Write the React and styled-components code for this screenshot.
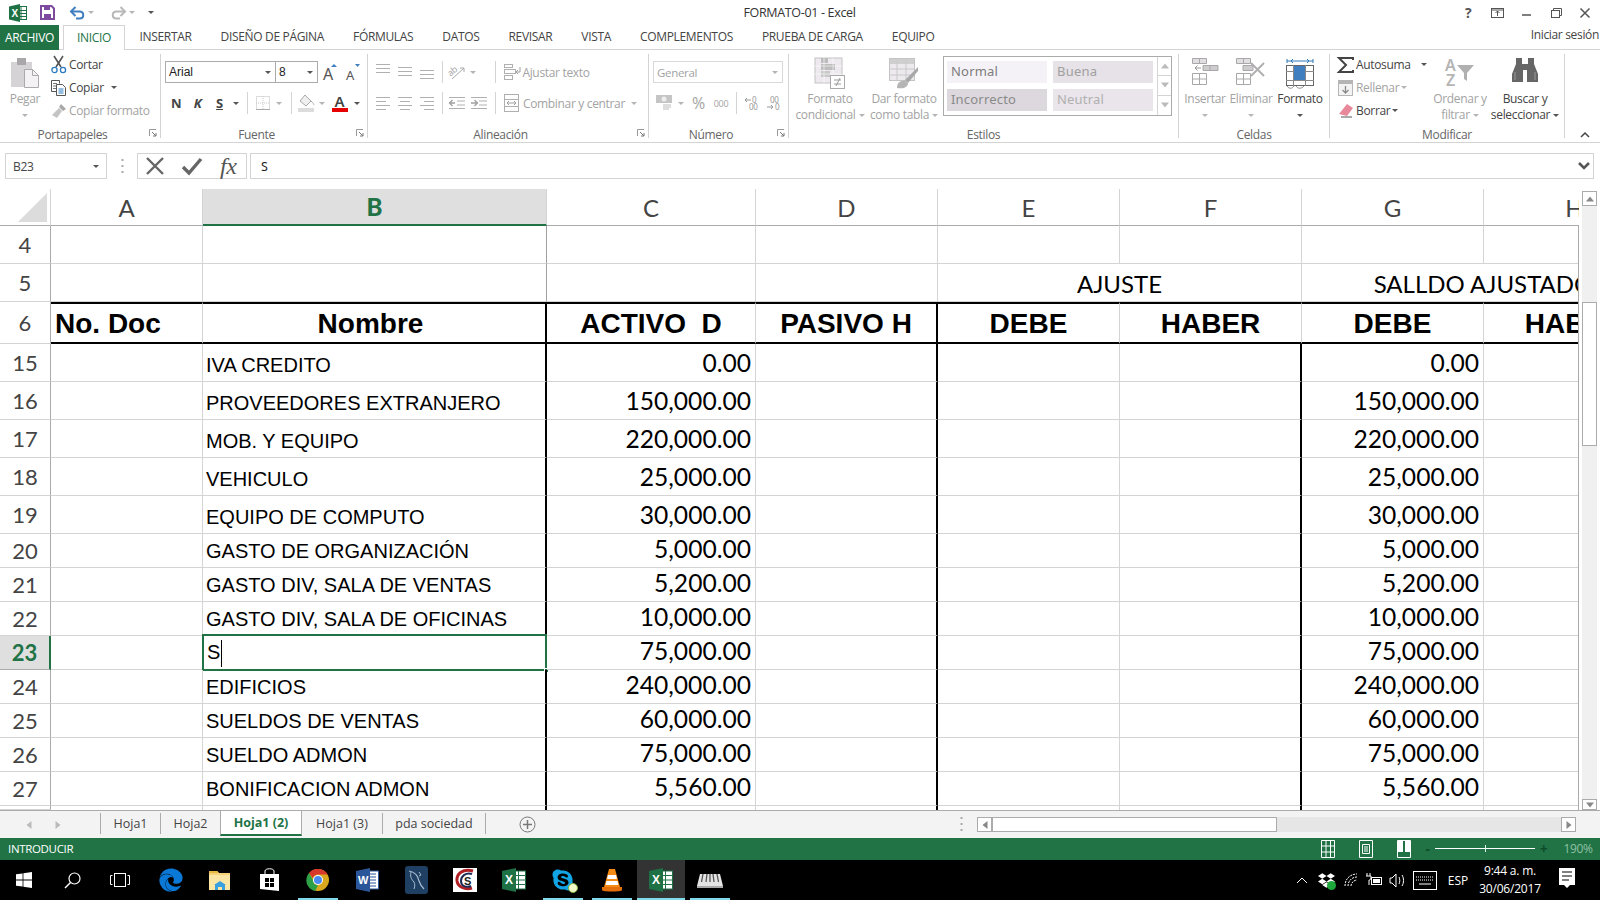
import React from "react";
import styled, { createGlobalStyle } from "styled-components";
import { FaEdge, FaSkype, FaDropbox } from "react-icons/fa";

const UI = '"Open Sans", "Noto Sans", sans-serif';
const CALIBRI = 'Lato, "Noto Sans", sans-serif';
const ARIAL = '"Liberation Sans", Arial, sans-serif';
const GREEN = "#217346";
const GRID = "#d4d4d4";
const EDGE = "#ababab";
const DIM = "#a3a3a3";
const COLS = "51px 152px 344px 209px 182px 182px 182px 182px 182px";

const GlobalStyle = createGlobalStyle`
  html, body { margin: 0; padding: 0; background: #fff; overflow: hidden; }
  * { box-sizing: border-box; }
  svg { overflow: visible; }
`;

const Window = styled.div`
  width: 1600px;
  height: 900px;
  display: flex;
  flex-direction: column;
  font-family: ${UI};
  font-size: 12px;
  letter-spacing: -0.33px;
  color: #444;
  overflow: hidden;
`;

/* title bar */
const TitleBar = styled.div`
  height: 25px;
  display: flex;
  align-items: center;
  padding-left: 9px;
  flex-shrink: 0;
`;
const Qat = styled.div`
  width: 502px;
  display: flex;
  align-items: center;
`;
const QatSlot = styled.div`
  width: ${(p) => p.$w}px;
  display: flex;
  align-items: center;
  gap: 3px;
`;
const WindowTitle = styled.div`
  width: 574px;
  text-align: center;
  font-size: 12.5px;
  color: #333;
  padding-left: 3px;
`;
const WinButtons = styled.div`
  margin-left: auto;
  padding-right: 0;
  display: flex;
`;
const WinButton = styled.div`
  width: 29.3px;
  height: 22px;
  display: flex;
  align-items: center;
  justify-content: center;
  font-weight: 700;
  font-size: 14px;
  color: #555;
`;

/* tabs */
const TabBar = styled.div`
  height: 25px;
  display: flex;
  border-bottom: 1px solid ${GRID};
  flex-shrink: 0;
`;
const FileTab = styled.div`
  width: 59px;
  height: 25px;
  background: ${GREEN};
  color: #fff;
  display: flex;
  align-items: center;
  justify-content: center;
  padding-bottom: 1px;
`;
const RibbonTab = styled.div`
  height: 25px;
  padding: 0 14.5px 2px;
  display: flex;
  align-items: center;
  white-space: nowrap;
  ${(p) =>
    p.$active
      ? `color: ${GREEN}; background:#fff; border: 1px solid ${GRID}; border-bottom: 0; margin-left: 4px; padding: 0 13px 2px;`
      : ""}
`;
const SignIn = styled.div`
  margin-left: auto;
  padding: 1px 1px 0 0;
  color: #444;
  white-space: nowrap;
`;

/* ribbon */
const Ribbon = styled.div`
  height: 93px;
  display: flex;
  padding-top: 4px;
  border-bottom: 1px solid ${GRID};
  flex-shrink: 0;
`;
const Group = styled.div`
  width: ${(p) => p.$w}px;
  height: 84px;
  border-right: 1px solid ${GRID};
  display: flex;
  flex-direction: column;
  flex-shrink: 0;
`;
const GroupBody = styled.div`
  height: 71px;
  display: flex;
  flex-shrink: 0;
  padding-left: ${(p) => p.$pl || 0}px;
`;
const GroupLabel = styled.div`
  height: 19px;
  flex-shrink: 0;
  position: relative;
  text-align: center;
  line-height: 19px;
  color: #666;
  padding-right: ${(p) => (p.$launcher ? 15 : 0)}px;
`;
const Launcher = styled.svg`
  position: absolute;
  right: 3px;
  top: 4px;
`;
const Collapse = styled.div`
  flex: 1;
  display: flex;
  align-items: flex-end;
  justify-content: flex-end;
  padding: 0 10px 0 0;
  height: 84px;
`;
const BigButton = styled.div`
  width: ${(p) => p.$w}px;
  display: flex;
  flex-direction: column;
  align-items: center;
  padding-top: 4px;
  flex-shrink: 0;
  color: ${(p) => (p.$dim ? DIM : "#444")};
`;
const BigIcon = styled.div`
  height: 33px;
  display: flex;
  align-items: flex-start;
  justify-content: center;
`;
const BigText = styled.div`
  height: 16px;
  line-height: 16px;
  white-space: nowrap;
  display: flex;
  align-items: center;
  gap: 3px;
`;
const CaretLine = styled.div`
  height: 16px;
  display: flex;
  align-items: center;
  justify-content: center;
`;
const Caret = styled.span`
  display: inline-block;
  width: 0;
  height: 0;
  border-left: 3px solid transparent;
  border-right: 3px solid transparent;
  border-top: 3px solid ${(p) => (p.$dim ? "#b5b5b5" : "#555")};
`;
const SmallColumn = styled.div`
  width: ${(p) => p.$w}px;
  display: flex;
  flex-direction: column;
  flex-shrink: 0;
  margin-top: -1px;
`;
const SmallRow = styled.div`
  height: 23px;
  display: flex;
  align-items: center;
  gap: 2px;
  white-space: nowrap;
  color: ${(p) => (p.$dim ? DIM : "#444")};
`;
const SmallIcon = styled.div`
  width: 17px;
  height: 18px;
  display: flex;
  align-items: center;
  justify-content: center;
  flex-shrink: 0;
`;
const ToolColumn = styled.div`
  display: flex;
  flex-direction: column;
  gap: 9px;
  padding-top: 7px;
`;
const ToolRow = styled.div`
  height: 22px;
  display: flex;
  align-items: center;
  white-space: nowrap;
  color: ${(p) => (p.$dim ? DIM : "#444")};
`;
const Slot = styled.div`
  width: ${(p) => p.$w}px;
  height: 22px;
  display: flex;
  align-items: center;
  justify-content: center;
  flex-shrink: 0;
  white-space: nowrap;
  font-weight: ${(p) => (p.$bold ? 700 : 400)};
  font-size: ${(p) => p.$size || 12}px;
  text-decoration: ${(p) => (p.$under ? "underline" : "none")};
  font-style: ${(p) => (p.$italic ? "italic" : "normal")};
  color: ${(p) => p.$color || "inherit"};
`;
const Divider = styled.div`
  width: 1px;
  height: 22px;
  background: ${GRID};
  flex-shrink: 0;
  margin-left: ${(p) => p.$l || 0}px;
  margin-right: ${(p) => p.$r || 0}px;
`;
const ComboBox = styled.div`
  width: ${(p) => p.$w}px;
  height: 22px;
  border: 1px solid ${(p) => (p.$dim ? "#d9d9d9" : EDGE)};
  background: #fff;
  display: flex;
  align-items: center;
  justify-content: space-between;
  padding: 0 4px 0 3px;
  margin-left: ${(p) => p.$ml || 0}px;
  flex-shrink: 0;
  color: ${(p) => (p.$dim ? DIM : "#222")};
  font-size: ${(p) => (p.$dim ? 11.5 : 12)}px;
`;
const ComboArial = styled.span`
  font-family: ${ARIAL};
  font-size: 12px;
  letter-spacing: 0;
`;
const Gallery = styled.div`
  width: 229px;
  height: 60px;
  margin: 2px 0 0 2px;
  border: 1px solid ${EDGE};
  display: flex;
  flex-shrink: 0;
`;
const StyleGrid = styled.div`
  display: grid;
  grid-template-columns: 100px 100px;
  grid-auto-rows: 22px;
  gap: 6px;
  padding: 4px 0 0 3px;
  width: 213px;
`;
const StyleCell = styled.div`
  background: ${(p) => p.$bg};
  color: ${(p) => p.$color};
  font-family: "Noto Sans", sans-serif;
  font-size: 13px;
  letter-spacing: 0.2px;
  line-height: 21px;
  padding-left: 4px;
`;
const GalleryScroll = styled.div`
  flex: 1;
  border-left: 1px solid ${GRID};
  display: grid;
  grid-template-rows: 1fr 1fr 1fr;
`;
const GalleryArrow = styled.div`
  display: flex;
  align-items: center;
  justify-content: center;
  border-bottom: ${(p) => (p.$last ? 0 : `1px solid ${GRID}`)};
`;

/* formula bar */
const FormulaBar = styled.div`
  height: 26px;
  margin: 10px 0;
  padding: 0 6px 0 5px;
  display: flex;
  flex-shrink: 0;
`;
const NameBox = styled.div`
  width: 102px;
  border: 1px solid ${GRID};
  display: flex;
  align-items: center;
  justify-content: space-between;
  padding: 0 7px;
  color: #444;
`;
const FormulaDots = styled.div`
  width: 30px;
  display: flex;
  align-items: center;
  justify-content: center;
`;
const FxBox = styled.div`
  width: 110px;
  border: 1px solid ${GRID};
  display: flex;
  align-items: center;
  gap: 18px;
  padding: 0 0 0 8px;
`;
const FxText = styled.span`
  font-family: "Liberation Serif", serif;
  font-style: italic;
  font-size: 24px;
  color: #555;
  line-height: 1;
`;
const FormulaInput = styled.div`
  flex: 1;
  margin-left: 3px;
  border: 1px solid ${GRID};
  display: flex;
  align-items: center;
  justify-content: space-between;
  padding: 0 3px 0 10px;
  font-family: "Noto Sans", sans-serif;
  font-size: 12.5px;
  color: #222;
`;

/* sheet */
const Sheet = styled.div`
  height: 621px;
  display: flex;
  flex-shrink: 0;
`;
const GridArea = styled.div`
  width: 1579px;
  overflow: hidden;
  display: flex;
  flex-direction: column;
  position: relative;
`;
const GridEdge = styled.div`
  position: absolute;
  right: 0;
  top: 36px;
  bottom: 0;
  width: 1px;
  background: ${EDGE};
`;
const Row = styled.div`
  display: grid;
  grid-template-columns: ${COLS};
  height: ${(p) => p.$h}px;
  flex-shrink: 0;
`;
const Corner = styled.div`
  border-right: 1px solid ${GRID};
  border-bottom: 1px solid ${EDGE};
  display: flex;
  padding: 4px 3px 3px 18px;
`;
const CornerMark = styled.div`
  width: 29px;
  height: 29px;
  background: #dcdcdc;
  clip-path: polygon(100% 0, 100% 100%, 0 100%);
`;
const ColHead = styled.div`
  border-right: 1px solid ${GRID};
  border-bottom: ${(p) => (p.$on ? `2px solid ${GREEN}` : `1px solid ${EDGE}`)};
  background: ${(p) => (p.$on ? "#dfdfdf" : "#fff")};
  color: ${(p) => (p.$on ? GREEN : "#444")};
  font-family: ${CALIBRI};
  font-weight: ${(p) => (p.$on ? 900 : 400)};
  font-size: 24px;
  letter-spacing: 0;
  display: flex;
  align-items: center;
  justify-content: center;
  overflow: hidden;
`;
const RowHead = styled.div`
  border-right: ${(p) => (p.$on ? `2px solid ${GREEN}` : `1px solid ${EDGE}`)};
  border-bottom: 1px solid ${(p) => (p.$on ? EDGE : GRID)};
  background: ${(p) => (p.$on ? "#dfdfdf" : "#fff")};
  color: ${(p) => (p.$on ? GREEN : "#444")};
  font-family: ${CALIBRI};
  font-weight: ${(p) => (p.$on ? 700 : 400)};
  font-size: 22px;
  letter-spacing: 0;
  display: flex;
  align-items: center;
  justify-content: center;
  padding-bottom: 1px;
  overflow: hidden;
`;
const Cell = styled.div`
  border-right: ${(p) => p.$right || `1px solid ${GRID}`};
  border-bottom: ${(p) => p.$bottom || `1px solid ${GRID}`};
  border-top: ${(p) => p.$top || "0"};
  ${(p) => (p.$span ? `grid-column: span ${p.$span};` : "")}
  display: flex;
  align-items: flex-end;
  justify-content: ${(p) => p.$justify || "flex-start"};
  white-space: pre;
  color: #000;
  position: relative;
  min-width: 0;
`;
const NameText = styled.span`
  font-family: ${ARIAL};
  font-size: 20px;
  letter-spacing: 0;
  line-height: 24px;
  padding: 0 0 4px 3px;
`;
const AmountText = styled.span`
  font-family: ${CALIBRI};
  font-size: 24.6px;
  letter-spacing: 0;
  line-height: 30px;
  padding: 0 4px 3px 0;
`;
const MergedText = styled.span`
  font-family: ${CALIBRI};
  font-size: 24px;
  letter-spacing: 0;
  line-height: 30px;
  padding-bottom: 2px;
`;
const TitleText = styled.span`
  font-family: ${ARIAL};
  font-weight: 700;
  font-size: 28px;
  letter-spacing: 0;
  line-height: 32px;
  padding: 0 ${(p) => p.$pr || 0}px 2px ${(p) => p.$pl || 0}px;
`;
const ActiveCell = styled.div`
  position: absolute;
  left: -1px;
  top: -2px;
  right: -2px;
  bottom: -2px;
  border: 2px solid ${GREEN};
  background: #fff;
  display: flex;
  align-items: flex-end;
  padding: 0 0 1px 0;
`;
const TextCaret = styled.span`
  width: 1px;
  height: 27px;
  background: #000;
  margin: 0 0 1px 1px;
`;
const FillHandle = styled.div`
  position: absolute;
  right: -4px;
  bottom: -4px;
  width: 5px;
  height: 5px;
  background: ${GREEN};
  border: 1px solid #fff;
`;

/* vertical scrollbar */
const VScroll = styled.div`
  width: 21px;
  padding: 2px 3px 0;
  display: flex;
  flex-direction: column;
`;
const ScrollButton = styled.div`
  width: ${(p) => p.$w || 15}px;
  height: ${(p) => p.$h || 15}px;
  background: #fff;
  border: 1px solid ${EDGE};
  display: flex;
  align-items: center;
  justify-content: center;
  flex-shrink: 0;
`;
const VTrack = styled.div`
  flex: 1;
  background: #f0f0f0;
  padding-top: 96px;
`;
const VThumb = styled.div`
  height: 144px;
  background: #fff;
  border: 1px solid ${EDGE};
`;

/* sheet tabs */
const SheetBar = styled.div`
  height: 28px;
  background: #f3f3f3;
  border-top: 1px solid ${EDGE};
  display: flex;
  flex-shrink: 0;
`;
const SheetNav = styled.div`
  width: 100px;
  display: flex;
  align-items: center;
  padding-left: 25px;
  gap: 21px;
`;
const SheetTab = styled.div`
  width: ${(p) => p.$w}px;
  height: 25px;
  display: flex;
  align-items: center;
  justify-content: center;
  font-size: 12.5px;
  white-space: nowrap;
  letter-spacing: 0;
  ${(p) =>
    p.$active
      ? `background:#fff; color:${GREEN}; font-weight:700; border-bottom:2px solid ${GREEN}; border-left:1px solid ${EDGE}; border-right:1px solid ${EDGE};`
      : `margin-top: 2px; height: 21px; border-right: ${
          p.$sep ? `1px solid ${EDGE}` : "0"
        }; border-left: ${p.$first ? `1px solid ${EDGE}` : "0"};`}
`;
const AddSheet = styled.div`
  margin-left: 33px;
  display: flex;
  align-items: center;
`;
const BarRight = styled.div`
  margin-left: auto;
  width: 647px;
  display: flex;
  align-items: center;
  padding-right: 24px;
`;
const SplitDots = styled.div`
  width: 16px;
  margin-right: 8px;
  display: flex;
  justify-content: center;
`;
const HScroll = styled.div`
  flex: 1;
  height: 15px;
  background: #e6e6e6;
  display: flex;
  justify-content: space-between;
`;
const HThumb = styled.div`
  width: 285px;
  height: 15px;
  background: #fff;
  border: 1px solid ${EDGE};
  margin-right: auto;
`;

/* status bar */
const StatusBar = styled.div`
  height: 22px;
  background: ${GREEN};
  color: #fff;
  display: flex;
  align-items: center;
  padding: 0 0 1px 8px;
  font-size: 11.5px;
  flex-shrink: 0;
`;
const StatusRight = styled.div`
  margin-left: auto;
  display: flex;
  align-items: center;
`;
const ViewSlot = styled.div`
  width: 38px;
  display: flex;
  justify-content: center;
`;
const ZoomSlider = styled.div`
  width: 100px;
  height: 1px;
  background: #fff;
  margin: 0 4px 0 3px;
  display: flex;
  justify-content: center;
  align-items: center;
`;
const ZoomTick = styled.div`
  width: 1px;
  height: 7px;
  background: #dfe;
  flex-shrink: 0;
`;
const ZoomSign = styled.span`
  color: #0e4d28;
  font-weight: 700;
  font-size: 14px;
  line-height: 1;
  width: 9px;
  text-align: center;
`;
const ZoomValue = styled.span`
  color: #8fc0a4;
  font-size: 12px;
  width: 52px;
  text-align: center;
  padding-left: 8px;
`;

/* taskbar */
const Taskbar = styled.div`
  height: 40px;
  background: #000;
  display: flex;
  flex-shrink: 0;
`;
const SysButton = styled.div`
  width: 48px;
  height: 40px;
  display: flex;
  align-items: center;
  justify-content: center;
`;
const TaskApps = styled.div`
  margin-left: 3px;
  display: flex;
  gap: 1px;
`;
const TaskApp = styled.div`
  width: 48px;
  height: 40px;
  display: flex;
  align-items: center;
  justify-content: center;
  position: relative;
  background: ${(p) => (p.$active ? "#333" : "transparent")};
  padding-bottom: 1px;
  &::after {
    content: "";
    position: absolute;
    left: ${(p) => (p.$active ? 0 : 4)}px;
    right: ${(p) => (p.$active ? 0 : 4)}px;
    bottom: 0;
    height: 2px;
    background: ${(p) => (p.$open ? "#7fdbe9" : "transparent")};
  }
`;
const AppBadge = styled.div`
  width: 23px;
  height: 28px;
  background: ${(p) => p.$bg};
  border-radius: ${(p) => p.$r || 0}px;
  display: flex;
  align-items: center;
  justify-content: center;
`;
const SkypeDot = styled.span`
  position: absolute;
  left: 29px;
  top: 23px;
  width: 10px;
  height: 10px;
  border-radius: 50%;
  background: #f4f7c8;
  border: 1px solid #7fb23a;
`;
const Tray = styled.div`
  margin-left: auto;
  display: flex;
  align-items: center;
  color: #fff;
`;
const TraySlot = styled.div`
  width: ${(p) => p.$w}px;
  display: flex;
  align-items: center;
  justify-content: center;
  font-size: 12px;
  letter-spacing: 0;
  position: relative;
`;
const TrayCheck = styled.span`
  position: absolute;
  left: 15px;
  top: 9px;
  width: 9px;
  height: 9px;
  border-radius: 50%;
  background: #1ea83c;
`;
const Clock = styled.div`
  width: 68px;
  text-align: center;
  font-size: 12px;
  line-height: 18px;
  letter-spacing: -0.2px;
  white-space: nowrap;
`;

/* drawings */
const Pegar = () => (
  <svg width="28" height="30" viewBox="0 0 28 30">
    <rect x="0" y="4" width="21" height="25" fill="#d6d3d7" />
    <rect x="6" y="0" width="9" height="7" fill="#aaa7ab" />
    <path d="M13.5 11.5h8l6 6v12h-14z" fill="#f4f2f5" stroke="#aaa" />
    <path d="M21.5 11.5v6h6" fill="none" stroke="#aaa" />
  </svg>
);
const Scissors = () => (
  <svg width="16" height="18" viewBox="0 0 16 18">
    <path d="M3 0l7 11M12 0L5 11" stroke="#555" strokeWidth="1.6" fill="none" />
    <circle cx="3.5" cy="14" r="2.6" fill="none" stroke="#2a7ac0" strokeWidth="1.3" />
    <circle cx="12" cy="14" r="2.6" fill="none" stroke="#2a7ac0" strokeWidth="1.3" />
  </svg>
);
const CopyIcon = () => (
  <svg width="16" height="16" viewBox="0 0 16 16">
    <path d="M.5.5h8v3M.5.5v11h5" fill="none" stroke="#555" />
    <path d="M2 3.5h4M2 6h3M2 8.500h3" stroke="#777" />
    <path d="M5.5 4.500h6l3 3v8h-9z" fill="#fff" stroke="#555" />
    <path d="M7.500 9h5M7.500 11h5M7.500 13h5" stroke="#2a7ac0" />
  </svg>
);
const BrushIcon = () => (
  <svg width="16" height="16" viewBox="0 0 16 16">
    <path d="M10 1l5 5-3 2-4-4z" fill="#a8a8a8" />
    <path d="M8 5l3 3-5 7-5-3z" fill="#c4c4c4" />
  </svg>
);
const FontGrow = ({ up }) => (
  <svg width="15" height="18" viewBox="0 0 15 18">
    <text x="0" y="17" fontFamily="Noto Sans, sans-serif" fontSize={up ? 16 : 13} fill="#555">
      A
    </text>
    <path d={up ? "M8 4l3-3 3 3z" : "M9 1h5l-2.500 3z"} fill="#3f7fbf" />
  </svg>
);
const BordersIcon = () => (
  <svg width="14" height="14" viewBox="0 0 14 14">
    <rect x=".5" y=".5" width="13" height="13" fill="none" stroke="#bbb" strokeDasharray="1 1" />
    <path d="M7 0v14M0 7h14" stroke="#c8c8c8" strokeDasharray="1 1" />
    <path d="M0 13.500h14" stroke="#aaa" />
  </svg>
);
const FillIcon = () => (
  <svg width="17" height="18" viewBox="0 0 17 18">
    <path d="M7 1l6 6-5 5-6-5z" fill="#efefef" stroke="#a8a8a8" />
    <path d="M13 7c2 2 3 3 3 4" stroke="#a8a8a8" fill="none" />
    <rect x="0" y="14" width="16" height="4" fill="#dcdcdc" />
  </svg>
);
const FontColorIcon = () => (
  <svg width="16" height="19" viewBox="0 0 16 19">
    <text x="2.500" y="13" fontFamily="Noto Sans, sans-serif" fontWeight="600" fontSize="15" fill="#444">
      A
    </text>
    <rect x="0" y="14" width="16" height="4" fill="#e60000" />
  </svg>
);
const AlignLines = ({ kind, top = 0 }) => {
  const spans = {
    left: [[0, 14], [0, 10], [0, 14], [0, 10]],
    center: [[0, 14], [2, 12], [0, 14], [2, 12]],
    right: [[0, 14], [4, 14], [0, 14], [4, 14]],
    flat: [[0, 14], [0, 14], [0, 14]],
  }[kind];
  return (
    <svg width="14" height="16" viewBox="0 0 14 16">
      {spans.map(([a, b], i) => (
        <path key={i} d={`M${a} ${top + i * 4 + 2.5}H${b}`} stroke="#b0b0b0" />
      ))}
    </svg>
  );
};
const OrientIcon = () => (
  <svg width="18" height="16" viewBox="0 0 18 16">
    <text x="0" y="10" fontSize="9" fontFamily="Noto Sans, sans-serif" fill="#aaa" transform="rotate(-40 5 8)">
      ab
    </text>
    <path d="M4 15L16 4M12 4h4v4" fill="none" stroke="#aaa" />
  </svg>
);
const IndentIcon = ({ flip }) => (
  <svg width="16" height="14" viewBox="0 0 16 14">
    <path d="M0 1.500h16M8 5h8M8 9h8M0 12.500h16" stroke="#b0b0b0" />
    <path d={flip ? "M0 7h6M3.500 4L6.500 7l-3 3" : "M6 7H.5M3.500 4L.5 7l3 3"} stroke="#a0a0a0" fill="none" strokeWidth="1.300" />
  </svg>
);
const WrapIcon = () => (
  <svg width="17" height="16" viewBox="0 0 17 16">
    <rect x=".5" y=".5" width="8" height="3" fill="none" stroke="#b0b0b0" />
    <rect x=".5" y="5.500" width="11" height="4" fill="none" stroke="#b0b0b0" />
    <rect x=".5" y="11.500" width="8" height="4" fill="none" stroke="#b0b0b0" />
    <path d="M16 3v5h-4M14 6l-2 2 2 2" fill="none" stroke="#a0a0a0" />
  </svg>
);
const MergeIcon = () => (
  <svg width="15" height="18" viewBox="0 0 15 18">
    <rect x=".5" y=".5" width="14" height="17" fill="none" stroke="#b0b0b0" />
    <path d="M0 5.500h15M0 12.500h15" stroke="#b0b0b0" />
    <path d="M3 9h9M3 9l2-2M3 9l2 2M12 9l-2-2M12 9l-2 2" fill="none" stroke="#a0a0a0" />
  </svg>
);
const CurrencyIcon = () => (
  <svg width="17" height="16" viewBox="0 0 17 16">
    <rect x="0" y="0" width="16" height="8" fill="#c5c5c5" />
    <circle cx="8" cy="4" r="2.500" fill="#eee" />
    <path d="M7 10h8M7 12h8M7 14h6" stroke="#bcbcbc" />
  </svg>
);
const DecIcon = ({ more }) => (
  <svg width="16" height="15" viewBox="0 0 16 15">
    <text x={more ? 4 : 8} y="7" fontSize="8" fontFamily="Noto Sans, sans-serif" fill="#999">
      {more ? "00" : "0"}
    </text>
    <text x={more ? 9 : 5} y="14" fontSize="8" fontFamily="Noto Sans, sans-serif" fill="#999">
      {more ? "0" : "00"}
    </text>
    <path d={more ? "M1 11h6M5 9l2 2-2 2" : "M7 4H1M3 2L1 4l2 2"} stroke="#999" fill="none" />
  </svg>
);
const CondIcon = () => (
  <svg width="30" height="31" viewBox="0 0 30 31">
    <rect x="0" y="0" width="27" height="25" fill="#eee9ef" stroke="#c4c4c4" />
    <rect x="6" y="0" width="7" height="5" fill="#bdbdbd" />
    <rect x="6" y="6" width="14" height="6" fill="#bdbdbd" />
    <rect x="6" y="13" width="9" height="6" fill="#c8c8c8" />
    <path d="M9 0v25M18 0v25M0 8h27M0 16h27" stroke="#fff" opacity=".6" />
    <rect x="15.500" y="17.500" width="14" height="13" fill="#fff" stroke="#aaa" />
    <path d="M19 22h7M19 26h7M25 20l-4 8" stroke="#999" fill="none" />
  </svg>
);
const TableIcon = () => (
  <svg width="30" height="31" viewBox="0 0 30 31">
    <rect x=".5" y=".5" width="25" height="22" fill="#eee9ef" stroke="#c4c4c4" />
    <rect x="1" y="1" width="24" height="5" fill="#cfcfcf" />
    <path d="M8 0v22M17 0v22M0 11h25M0 17h25" stroke="#c9c9c9" />
    <path d="M29 9L16 22l3 3L29 13z" fill="#a8a8a8" />
    <path d="M8 30c0-6 4-8 9-7l2 2c0 4-4 6-11 5z" fill="#b5b5b5" />
  </svg>
);
const InsertCells = () => (
  <svg width="27" height="28" viewBox="0 0 27 28">
    <path d="M.5.500h14v5H.500zM7.500.500v5" fill="#e2dfe3" stroke="#a8a8a8" />
    <path d="M11 7.500h15v5H11zM18 7.500v5" fill="#cfcccf" stroke="#a8a8a8" />
    <path d="M3 10h6M3 10l2.500-2.500M3 10l2.500 2.500" stroke="#999" fill="none" />
    <path d="M.5 15.500h14v11H.500zM7.500 15.500v11M.5 21h14" fill="#fff" stroke="#a8a8a8" />
  </svg>
);
const DeleteCells = () => (
  <svg width="30" height="28" viewBox="0 0 30 28">
    <path d="M.5.500h14v5H.500zM7.500.500v5" fill="#e2dfe3" stroke="#a8a8a8" />
    <path d="M7 7.500h10v5H7z" fill="#cfcccf" stroke="#a8a8a8" />
    <path d="M.5 15.500h14v11H.500zM7.500 15.500v11M.5 21h14" fill="#fff" stroke="#a8a8a8" />
    <path d="M15 5l13 13M28 5L15 18" stroke="#b0b0b0" strokeWidth="2" />
  </svg>
);
const FormatCells = () => (
  <svg width="28" height="31" viewBox="0 0 28 31">
    <path d="M1 3h26M1 1v4M27 1v4M5 3l2-2M5 3l2 2M23 3l-2-2M23 3l-2 2" stroke="#2f78b8" fill="none" />
    <rect x=".5" y="7.500" width="27" height="20" fill="#fff" stroke="#666" />
    <path d="M7.500 7v21M19.500 7v21M0 13.500h28M0 22.500h28" stroke="#888" />
    <rect x="8" y="8" width="11" height="14" fill="#3f7fbf" />
    <path d="M1 28c2 3 5 3 7 0M10 28c2 3 5 3 8 0" stroke="#888" fill="none" />
  </svg>
);
const Sigma = () => (
  <svg width="16" height="16" viewBox="0 0 16 16">
    <path d="M15 3V1H1l7 7-7 7h14v-2" fill="none" stroke="#444" strokeWidth="2" />
  </svg>
);
const FillDown = () => (
  <svg width="15" height="16" viewBox="0 0 15 16">
    <rect x=".5" y=".5" width="14" height="15" fill="#f3f3f3" stroke="#b5b5b5" />
    <rect x="1" y="1" width="13" height="3" fill="#b5b5b5" />
    <path d="M7.500 6v7M4.500 10l3 3 3-3" stroke="#8a8a8a" fill="none" strokeWidth="1.300" />
  </svg>
);
const Eraser = () => (
  <svg width="16" height="14" viewBox="0 0 16 14">
    <path d="M9 0l6 4-6 8-8-2z" fill="#e8899b" />
    <path d="M3 13h11" stroke="#555" />
  </svg>
);
const SortIcon = () => (
  <svg width="30" height="28" viewBox="0 0 30 28">
    <text x="0" y="13" fontFamily="Noto Sans, sans-serif" fontWeight="600" fontSize="16" fill="#b5b5b5">
      A
    </text>
    <text x="1" y="28" fontFamily="Noto Sans, sans-serif" fontWeight="600" fontSize="16" fill="#b5b5b5">
      Z
    </text>
    <path d="M12 7h17l-7 8v8l-3-2v-6z" fill="#b0b0b0" />
  </svg>
);
const Binoculars = () => (
  <svg width="26" height="24" viewBox="0 0 26 24">
    <path d="M4 0h6v6h6V0h6v6l4 10v8H15V12h-4v12H0v-8L4 6z" fill="#666" />
    <path d="M3 22V14M23 22V14" stroke="#999" />
  </svg>
);
const ChevronUp = () => (
  <svg width="10" height="6" viewBox="0 0 10 6">
    <path d="M1 5l4-4 4 4" fill="none" stroke="#444" strokeWidth="1.500" />
  </svg>
);
const LauncherMark = () => (
  <Launcher width="8" height="8" viewBox="0 0 8 8">
    <path d="M.5 7V.500H7" fill="none" stroke="#999" />
    <path d="M3 3l4 4M4 7h3V4" fill="none" stroke="#777" />
  </Launcher>
);
const ExcelMark = ({ size = 18 }) => (
  <svg width={size} height={size} viewBox="0 0 18 18">
    <rect x="8" y="2.500" width="9.500" height="13" fill="#fff" stroke="#1e7145" />
    <path d="M8 6.500h9M8 9.500h9M8 12.500h9M12 3v12" stroke="#1e7145" />
    <path d="M0 2.500L11 0v18L0 15.500z" fill="#1e7145" />
    <text x="2.500" y="12.500" fontFamily="Liberation Sans, sans-serif" fontWeight="700" fontSize="10" fill="#fff">
      X
    </text>
  </svg>
);
const SaveIcon = () => (
  <svg width="15" height="15" viewBox="0 0 15 15">
    <path d="M1 1h10.500L14 3.500V14H1z" fill="#fff" stroke="#7d4aa0" strokeWidth="2" />
    <rect x="4" y="1" width="6" height="4" fill="#7d4aa0" />
    <rect x="4" y="9" width="7" height="5" fill="#7d4aa0" />
  </svg>
);
const UndoIcon = ({ color, flip }) => (
  <svg width="15" height="14" viewBox="0 0 15 14">
    <g transform={flip ? "matrix(-1 0 0 1 15 0)" : undefined}>
      <path d="M1.500 5.500h8c5 0 5 7 0 7H6" fill="none" stroke={color} strokeWidth="2" />
      <path d="M5.500 1L1 5.500 5.500 10" fill="none" stroke={color} strokeWidth="2" />
    </g>
  </svg>
);
const WindowsLogo = () => (
  <svg width="16" height="16" viewBox="0 0 16 16">
    <path d="M0 2.300l6.600-.9v6.200H0zM7.400 1.300L16 0v7.600H7.400zM0 8.400h6.600v6.200L0 13.700zM7.400 8.400H16V16l-8.600-1.200z" fill="#fff" />
  </svg>
);
const SearchIcon = () => (
  <svg width="17" height="17" viewBox="0 0 17 17">
    <circle cx="10.500" cy="6.500" r="5.500" fill="none" stroke="#fff" strokeWidth="1.200" />
    <path d="M6.500 10.500L1 16" stroke="#fff" strokeWidth="1.500" />
  </svg>
);
const TaskViewIcon = () => (
  <svg width="20" height="14" viewBox="0 0 20 14">
    <rect x="4.500" y=".5" width="11" height="13" fill="none" stroke="#fff" />
    <path d="M2.500 2.500H.5v9h2M17.500 2.500h2v9h-2" fill="none" stroke="#fff" />
  </svg>
);
const FolderIcon = () => (
  <svg width="22" height="22" viewBox="0 0 22 22">
    <path d="M0 2h8l2 2h11v17H0z" fill="#f5d479" />
    <path d="M0 2h8l2 2H0z" fill="#e8b93f" />
    <rect x="0" y="6" width="21" height="15" fill="#fbe6a3" />
    <path d="M6 21v-5h-1l6-4 6 4h-1v5h-3v-3H9v3z" fill="#3aa0e0" />
  </svg>
);
const StoreIcon = () => (
  <svg width="21" height="24" viewBox="0 0 21 24">
    <path d="M6 6V3c0-3 9-3 9 0v3" fill="none" stroke="#fff" />
    <path d="M1 6h19v17L1 21z" fill="#fff" />
    <path d="M6 10h4v4H6zM11 10h4v4h-4zM6 15h4v4H6zM11 15h4v4h-4z" fill="#000" />
  </svg>
);
const ChromeIcon = () => (
  <svg width="22" height="22" viewBox="0 0 22 22">
    <circle cx="11" cy="11" r="11" fill="#d9a81e" />
    <path d="M11 0a11 11 0 0 1 9.500 5.500H11a5.500 5.500 0 0 0-5.200 3.700L2 4A11 11 0 0 1 11 0z" fill="#d8382c" />
    <path d="M2 4l4 7a5.500 5.500 0 0 0 5 5.500L8 22A11 11 0 0 1 2 4z" fill="#2c9f47" />
    <circle cx="11" cy="11" r="5" fill="#fff" />
    <circle cx="11" cy="11" r="4" fill="#4a8af4" />
  </svg>
);
const WordIcon = () => (
  <svg width="23" height="24" viewBox="0 0 23 24">
    <rect x="9" y="3" width="13.500" height="18" fill="#fff" stroke="#2b579a" />
    <path d="M12 6h8M12 9h8M12 12h8M12 15h8M12 18h8" stroke="#2b579a" />
    <path d="M0 3L14 0v24L0 21z" fill="#2b579a" />
    <text x="2" y="16" fontFamily="Liberation Sans, sans-serif" fontWeight="700" fontSize="11" fill="#fff">
      W
    </text>
  </svg>
);
const DolphinIcon = () => (
  <svg width="20" height="24" viewBox="0 0 20 24">
    <path d="M3 3c6 1 9 5 10 10 1 3 3 6 5 8" fill="none" stroke="#a9bdd2" strokeWidth="1.200" />
    <path d="M5 4c-1 4 0 7 3 10 1 2 1 4 0 7" fill="none" stroke="#a9bdd2" />
    <path d="M13 4l2 3-2 1" fill="none" stroke="#a9bdd2" />
  </svg>
);
const CsLogo = () => (
  <svg width="24" height="24" viewBox="0 0 24 24">
    <rect width="24" height="24" fill="#fff" />
    <path d="M20 3C10 0 3 6 4 13c1 6 8 9 15 7" fill="none" stroke="#b01e24" strokeWidth="3" />
    <path d="M19 6C13 4 8 8 8 13s5 7 10 5" fill="none" stroke="#1e2a55" strokeWidth="2" />
    <text x="11" y="17" fontFamily="Liberation Sans, sans-serif" fontWeight="700" fontSize="11" fill="#222">
      S
    </text>
  </svg>
);
const ExcelTask = () => (
  <svg width="24" height="24" viewBox="0 0 24 24">
    <rect x="10" y="3" width="13.500" height="18" fill="#fff" stroke="#1e7145" />
    <path d="M10 7.500h14M10 12h14M10 16.500h14M16.500 3v18" stroke="#1e7145" />
    <path d="M0 3L14 0v24L0 21z" fill="#1e7145" />
    <text x="3" y="16" fontFamily="Liberation Sans, sans-serif" fontWeight="700" fontSize="12" fill="#fff">
      X
    </text>
  </svg>
);
const VlcIcon = () => (
  <svg width="20" height="24" viewBox="0 0 20 24">
    <path d="M7 1h6l5 18H2z" fill="#f58a14" />
    <path d="M6 7h8l1 4H5zM4.500 13h11l1 4h-13z" fill="#fff" />
    <path d="M0 19h20v3c0 2-20 2-20 0z" fill="#e56f0a" />
  </svg>
);
const PianoIcon = () => (
  <svg width="26" height="18" viewBox="0 0 26 18">
    <path d="M3 3h20l3 12H0z" fill="#e4e4e4" />
    <path d="M6 3L4.500 11M10 3L9 11M13 3v8M16 3l1 8M20 3l1.500 8" stroke="#555" strokeWidth="1.300" />
    <rect y="15" width="26" height="2" fill="#aaa" />
  </svg>
);
const WifiIcon = () => (
  <svg width="14" height="14" viewBox="0 0 14 14">
    <path d="M1 13C1 6 6 1 13 1M4 13c0-5 4-9 9-9M7 13c0-3 3-6 6-6" fill="none" stroke="#fff" strokeDasharray="2 1" />
  </svg>
);
const PowerIcon = () => (
  <svg width="18" height="16" viewBox="0 0 18 16">
    <rect x="6.500" y="5.500" width="10" height="7" fill="#000" stroke="#fff" />
    <rect x="8" y="7" width="7" height="4" fill="#fff" />
    <path d="M2 1v3M5 1v3M1 4h5v2c0 2-2 2-2 2v5" fill="none" stroke="#fff" />
  </svg>
);
const VolumeIcon = () => (
  <svg width="17" height="17" viewBox="0 0 17 17">
    <path d="M1 6h2l4-4v13l-4-4H1z" fill="none" stroke="#fff" />
    <path d="M10 5c1 2 1 5 0 7M13 3c2 3 2 8 0 11" fill="none" stroke="#fff" />
  </svg>
);
const KeyboardIcon = () => (
  <svg width="24" height="19" viewBox="0 0 24 19">
    <rect x=".5" y=".5" width="23" height="18" fill="none" stroke="#fff" />
    <path d="M3 6h18M3 9h18" stroke="#fff" strokeDasharray="1 1" />
    <path d="M6 13h12" stroke="#fff" />
  </svg>
);
const NoteIcon = () => (
  <svg width="16" height="24" viewBox="0 0 16 24">
    <path d="M0 0h16v17h-5l-3 3-3-3H0z" fill="#fff" />
    <path d="M3 4h10M3 8h10M3 12h7" stroke="#000" />
  </svg>
);
const TriSmall = ({ dir = "up", color = "#888" }) => {
  const d = { up: "M0 5L4 0l4 5z", down: "M0 0h8L4 5z", left: "M5 0v8L0 4z", right: "M0 0v8l5-4z" }[dir];
  return (
    <svg width="8" height="8" viewBox="0 0 8 8">
      <path d={d} fill={color} transform={dir === "up" || dir === "down" ? "translate(0 1.500)" : "translate(1.500 0)"} />
    </svg>
  );
};

const TABS = ["INSERTAR", "DISEÑO DE PÁGINA", "FÓRMULAS", "DATOS", "REVISAR", "VISTA", "COMPLEMENTOS", "PRUEBA DE CARGA", "EQUIPO"];

const ROWS = [
  [15, "IVA CREDITO", "0.00", 38],
  [16, "PROVEEDORES EXTRANJERO", "150,000.00", 38],
  [17, "MOB. Y EQUIPO", "220,000.00", 38],
  [18, "VEHICULO", "25,000.00", 38],
  [19, "EQUIPO DE COMPUTO", "30,000.00", 38],
  [20, "GASTO DE ORGANIZACIÓN", "5,000.00", 34],
  [21, "GASTO DIV, SALA DE VENTAS", "5,200.00", 34],
  [22, "GASTO DIV, SALA DE OFICINAS", "10,000.00", 34],
  [23, "S", "75,000.00", 34],
  [24, "EDIFICIOS", "240,000.00", 34],
  [25, "SUELDOS DE VENTAS", "60,000.00", 34],
  [26, "SUELDO ADMON", "75,000.00", 34],
  [27, "BONIFICACION ADMON", "5,560.00", 34],
];

const BLACK = "2px solid #000";

const App = () => {
  return (
    <Window>
      <GlobalStyle />
      <TitleBar>
        <Qat>
          <QatSlot $w={31}>
            <ExcelMark />
          </QatSlot>
          <QatSlot $w={30}>
            <SaveIcon />
          </QatSlot>
          <QatSlot $w={41}>
            <UndoIcon color="#3f7fbf" />
            <Caret $dim />
          </QatSlot>
          <QatSlot $w={37}>
            <UndoIcon color="#b8b8b8" flip />
            <Caret $dim />
          </QatSlot>
          <QatSlot $w={10}>
            <Caret />
          </QatSlot>
        </Qat>
        <WindowTitle>FORMATO-01 - Excel</WindowTitle>
        <WinButtons>
          <WinButton>?</WinButton>
          <WinButton>
            <svg width="13" height="10" viewBox="0 0 13 10">
              <rect x=".5" y=".5" width="12" height="9" fill="none" stroke="#555" />
              <path d="M6.500 8V3M4.500 5l2-2 2 2M1 2h11" stroke="#555" fill="none" />
            </svg>
          </WinButton>
          <WinButton>
            <svg width="10" height="10" viewBox="0 0 10 10">
              <path d="M0 7h9" stroke="#555" strokeWidth="1.500" />
            </svg>
          </WinButton>
          <WinButton>
            <svg width="11" height="10" viewBox="0 0 11 10">
              <rect x=".5" y="2.500" width="8" height="7" fill="none" stroke="#555" />
              <path d="M2.500 2V.500h8v7H9" fill="none" stroke="#555" />
            </svg>
          </WinButton>
          <WinButton>
            <svg width="10" height="10" viewBox="0 0 10 10">
              <path d="M.5.500l9 9M9.500.500l-9 9" stroke="#555" strokeWidth="1.500" />
            </svg>
          </WinButton>
        </WinButtons>
      </TitleBar>

      <TabBar>
        <FileTab>ARCHIVO</FileTab>
        <RibbonTab $active>INICIO</RibbonTab>
        {TABS.map((t) => (
          <RibbonTab key={t}>{t}</RibbonTab>
        ))}
        <SignIn>Iniciar sesión</SignIn>
      </TabBar>

      <Ribbon>
        <Group $w={161}>
          <GroupBody>
            <BigButton $w={50} $dim>
              <BigIcon>
                <Pegar />
              </BigIcon>
              <BigText>Pegar</BigText>
              <CaretLine>
                <Caret $dim />
              </CaretLine>
            </BigButton>
            <SmallColumn $w={110}>
              <SmallRow>
                <SmallIcon>
                  <Scissors />
                </SmallIcon>
                Cortar
              </SmallRow>
              <SmallRow>
                <SmallIcon>
                  <CopyIcon />
                </SmallIcon>
                Copiar&nbsp;&nbsp;
                <Caret />
              </SmallRow>
              <SmallRow $dim>
                <SmallIcon>
                  <BrushIcon />
                </SmallIcon>
                Copiar formato
              </SmallRow>
            </SmallColumn>
          </GroupBody>
          <GroupLabel $launcher>
            Portapapeles
            <LauncherMark />
          </GroupLabel>
        </Group>

        <Group $w={207}>
          <GroupBody $pl={4}>
            <ToolColumn>
              <ToolRow>
                <ComboBox $w={111}>
                  <ComboArial>Arial</ComboArial>
                  <Caret />
                </ComboBox>
                <ComboBox $w={43} $ml={-1}>
                  <ComboArial>8</ComboArial>
                  <Caret />
                </ComboBox>
                <Slot $w={25}>
                  <FontGrow up />
                </Slot>
                <Slot $w={21}>
                  <FontGrow />
                </Slot>
              </ToolRow>
              <ToolRow>
                <Slot $w={22} $bold $size={13}>
                  N
                </Slot>
                <Slot $w={21} $bold $italic $size={13}>
                  K
                </Slot>
                <Slot $w={23} $bold $under $size={13}>
                  S
                </Slot>
                <Slot $w={10}>
                  <Caret />
                </Slot>
                <Divider $l={6} $r={5} />
                <Slot $w={19}>
                  <BordersIcon />
                </Slot>
                <Slot $w={14}>
                  <Caret $dim />
                </Slot>
                <Divider $l={5} $r={4} />
                <Slot $w={20}>
                  <FillIcon />
                </Slot>
                <Slot $w={12}>
                  <Caret $dim />
                </Slot>
                <Slot $w={24}>
                  <FontColorIcon />
                </Slot>
                <Slot $w={10}>
                  <Caret />
                </Slot>
              </ToolRow>
            </ToolColumn>
          </GroupBody>
          <GroupLabel $launcher>
            Fuente
            <LauncherMark />
          </GroupLabel>
        </Group>

        <Group $w={281}>
          <GroupBody $pl={4}>
            <ToolColumn>
              <ToolRow $dim>
                <Slot $w={22}>
                  <AlignLines kind="flat" top={-2} />
                </Slot>
                <Slot $w={22}>
                  <AlignLines kind="flat" top={1} />
                </Slot>
                <Slot $w={22}>
                  <AlignLines kind="flat" top={4} />
                </Slot>
                <Divider $l={4} $r={3} />
                <Slot $w={22}>
                  <OrientIcon />
                </Slot>
                <Slot $w={10}>
                  <Caret $dim />
                </Slot>
                <Divider $l={17} $r={8} />
                <WrapIcon />
                <Slot $w={70} $color={DIM}>
                  Ajustar texto
                </Slot>
              </ToolRow>
              <ToolRow $dim>
                <Slot $w={22}>
                  <AlignLines kind="left" />
                </Slot>
                <Slot $w={22}>
                  <AlignLines kind="center" />
                </Slot>
                <Slot $w={22}>
                  <AlignLines kind="right" />
                </Slot>
                <Divider $l={4} $r={3} />
                <Slot $w={22}>
                  <IndentIcon />
                </Slot>
                <Slot $w={21}>
                  <IndentIcon flip />
                </Slot>
                <Divider $l={6} $r={8} />
                <MergeIcon />
                <Slot $w={110} $color={DIM}>
                  Combinar y centrar
                </Slot>
                <Slot $w={10}>
                  <Caret $dim />
                </Slot>
              </ToolRow>
            </ToolColumn>
          </GroupBody>
          <GroupLabel $launcher>
            Alineación
            <LauncherMark />
          </GroupLabel>
        </Group>

        <Group $w={140}>
          <GroupBody $pl={4}>
            <ToolColumn>
              <ToolRow>
                <ComboBox $w={130} $dim>
                  General
                  <Caret $dim />
                </ComboBox>
              </ToolRow>
              <ToolRow $dim>
                <Slot $w={23}>
                  <CurrencyIcon />
                </Slot>
                <Slot $w={10}>
                  <Caret $dim />
                </Slot>
                <Slot $w={25} $size={16}>
                  %
                </Slot>
                <Slot $w={20} $size={9}>
                  000
                </Slot>
                <Divider $l={5} $r={4} />
                <Slot $w={21}>
                  <DecIcon />
                </Slot>
                <Slot $w={24}>
                  <DecIcon more />
                </Slot>
              </ToolRow>
            </ToolColumn>
          </GroupBody>
          <GroupLabel $launcher>
            Número
            <LauncherMark />
          </GroupLabel>
        </Group>

        <Group $w={390}>
          <GroupBody $pl={4}>
            <BigButton $w={74} $dim>
              <BigIcon>
                <CondIcon />
              </BigIcon>
              <BigText>Formato</BigText>
              <BigText>
                condicional
                <Caret $dim />
              </BigText>
            </BigButton>
            <BigButton $w={74} $dim>
              <BigIcon>
                <TableIcon />
              </BigIcon>
              <BigText>Dar formato</BigText>
              <BigText>
                como tabla
                <Caret $dim />
              </BigText>
            </BigButton>
            <Gallery>
              <StyleGrid>
                <StyleCell $bg="#f5f2f7" $color="#7c7c7c">
                  Normal
                </StyleCell>
                <StyleCell $bg="#e6e2e7" $color="#a0a0a0">
                  Buena
                </StyleCell>
                <StyleCell $bg="#dcd8dd" $color="#8a8a8a">
                  Incorrecto
                </StyleCell>
                <StyleCell $bg="#e9e5ea" $color="#b0b0b0">
                  Neutral
                </StyleCell>
              </StyleGrid>
              <GalleryScroll>
                <GalleryArrow>
                  <TriSmall dir="up" color="#bbb" />
                </GalleryArrow>
                <GalleryArrow>
                  <TriSmall dir="down" color="#bbb" />
                </GalleryArrow>
                <GalleryArrow $last>
                  <TriSmall dir="down" color="#bbb" />
                </GalleryArrow>
              </GalleryScroll>
            </Gallery>
          </GroupBody>
          <GroupLabel>Estilos</GroupLabel>
        </Group>

        <Group $w={151}>
          <GroupBody $pl={4}>
            <BigButton $w={44} $dim>
              <BigIcon>
                <InsertCells />
              </BigIcon>
              <BigText>Insertar</BigText>
              <CaretLine>
                <Caret $dim />
              </CaretLine>
            </BigButton>
            <BigButton $w={48} $dim>
              <BigIcon>
                <DeleteCells />
              </BigIcon>
              <BigText>Eliminar</BigText>
              <CaretLine>
                <Caret $dim />
              </CaretLine>
            </BigButton>
            <BigButton $w={50}>
              <BigIcon>
                <FormatCells />
              </BigIcon>
              <BigText>Formato</BigText>
              <CaretLine>
                <Caret />
              </CaretLine>
            </BigButton>
          </GroupBody>
          <GroupLabel>Celdas</GroupLabel>
        </Group>

        <Group $w={235}>
          <GroupBody $pl={7}>
            <SmallColumn $w={94}>
              <SmallRow>
                <SmallIcon>
                  <Sigma />
                </SmallIcon>
                Autosuma&nbsp;&nbsp;&nbsp;
                <Caret />
              </SmallRow>
              <SmallRow $dim>
                <SmallIcon>
                  <FillDown />
                </SmallIcon>
                Rellenar
                <Caret $dim />
              </SmallRow>
              <SmallRow>
                <SmallIcon>
                  <Eraser />
                </SmallIcon>
                Borrar
                <Caret />
              </SmallRow>
            </SmallColumn>
            <BigButton $w={58} $dim>
              <BigIcon>
                <SortIcon />
              </BigIcon>
              <BigText>Ordenar y</BigText>
              <BigText>
                filtrar
                <Caret $dim />
              </BigText>
            </BigButton>
            <BigButton $w={72}>
              <BigIcon>
                <Binoculars />
              </BigIcon>
              <BigText>Buscar y</BigText>
              <BigText>
                seleccionar
                <Caret />
              </BigText>
            </BigButton>
          </GroupBody>
          <GroupLabel>Modificar</GroupLabel>
        </Group>

        <Collapse>
          <ChevronUp />
        </Collapse>
      </Ribbon>

      <FormulaBar>
        <NameBox>
          B23
          <Caret />
        </NameBox>
        <FormulaDots>
          <svg width="3" height="14" viewBox="0 0 3 14">
            <path d="M1.500 0v14" stroke="#aaa" strokeWidth="2" strokeDasharray="2 4" />
          </svg>
        </FormulaDots>
        <FxBox>
          <svg width="18" height="18" viewBox="0 0 18 18">
            <path d="M1 1l16 16M17 1L1 17" stroke="#666" strokeWidth="2.400" />
          </svg>
          <svg width="20" height="18" viewBox="0 0 20 18">
            <path d="M1 10l6 6L19 2" fill="none" stroke="#666" strokeWidth="3.400" />
          </svg>
          <FxText>fx</FxText>
        </FxBox>
        <FormulaInput>
          S
          <svg width="12" height="8" viewBox="0 0 12 8">
            <path d="M1 1l5 5 5-5" fill="none" stroke="#555" strokeWidth="2.500" />
          </svg>
        </FormulaInput>
      </FormulaBar>

      <Sheet>
        <GridArea>
          <Row $h={37}>
            <Corner>
              <CornerMark />
            </Corner>
            <ColHead>A</ColHead>
            <ColHead $on>B</ColHead>
            {["C", "D", "E", "F", "G", "H"].map((c) => (
              <ColHead key={c}>{c}</ColHead>
            ))}
          </Row>
          <Row $h={38}>
            <RowHead>4</RowHead>
            <Cell />
            <Cell $right="1px solid #a0a0a0" />
            <Cell />
            <Cell />
            <Cell />
            <Cell />
            <Cell />
            <Cell />
          </Row>
          <Row $h={38}>
            <RowHead>5</RowHead>
            <Cell />
            <Cell $right="1px solid #a0a0a0" />
            <Cell />
            <Cell />
            <Cell $span={2} $justify="center">
              <MergedText>AJUSTE</MergedText>
            </Cell>
            <Cell $span={2} $justify="center">
              <MergedText>SALLDO AJUSTADO</MergedText>
            </Cell>
          </Row>
          <Row $h={42}>
            <RowHead>6</RowHead>
            <Cell $top={BLACK} $bottom={BLACK}>
              <TitleText $pl={4}>No. Doc</TitleText>
            </Cell>
            <Cell $top={BLACK} $bottom={BLACK} $right={BLACK} $justify="center">
              <TitleText $pr={7}>Nombre</TitleText>
            </Cell>
            <Cell $top={BLACK} $bottom={BLACK} $justify="center">
              <TitleText>{"ACTIVO  D"}</TitleText>
            </Cell>
            <Cell $top={BLACK} $bottom={BLACK} $right={BLACK} $justify="center">
              <TitleText>PASIVO H</TitleText>
            </Cell>
            <Cell $top={BLACK} $bottom={BLACK} $justify="center">
              <TitleText>DEBE</TitleText>
            </Cell>
            <Cell $top={BLACK} $bottom={BLACK} $justify="center">
              <TitleText>HABER</TitleText>
            </Cell>
            <Cell $top={BLACK} $bottom={BLACK} $justify="center">
              <TitleText>DEBE</TitleText>
            </Cell>
            <Cell $top={BLACK} $bottom={BLACK} $justify="center">
              <TitleText>HABER</TitleText>
            </Cell>
          </Row>
          {ROWS.map(([n, name, amount, h]) => (
            <Row key={n} $h={h}>
              <RowHead $on={n === 23}>{n}</RowHead>
              <Cell />
              <Cell $right={BLACK}>
                {n === 23 ? (
                  <ActiveCell>
                    <NameText>{name}</NameText>
                    <TextCaret />
                    <FillHandle />
                  </ActiveCell>
                ) : (
                  <NameText>{name}</NameText>
                )}
              </Cell>
              <Cell $justify="flex-end">
                <AmountText>{amount}</AmountText>
              </Cell>
              <Cell $right={BLACK} />
              <Cell />
              <Cell $right={BLACK} />
              <Cell $justify="flex-end">
                <AmountText>{amount}</AmountText>
              </Cell>
              <Cell />
            </Row>
          ))}
          <Row $h={4}>
            <RowHead />
            <Cell $bottom="0" />
            <Cell $right={BLACK} $bottom="0" />
            <Cell $bottom="0" />
            <Cell $right={BLACK} $bottom="0" />
            <Cell $bottom="0" />
            <Cell $right={BLACK} $bottom="0" />
            <Cell $bottom="0" />
            <Cell $bottom="0" />
          </Row>
          <GridEdge />
        </GridArea>
        <VScroll>
          <ScrollButton>
            <TriSmall dir="up" />
          </ScrollButton>
          <VTrack>
            <VThumb />
          </VTrack>
          <ScrollButton $h={11}>
            <TriSmall dir="down" />
          </ScrollButton>
        </VScroll>
      </Sheet>

      <SheetBar>
        <SheetNav>
          <TriSmall dir="left" color="#bbb" />
          <TriSmall dir="right" color="#bbb" />
        </SheetNav>
        <SheetTab $w={61} $first $sep>
          Hoja1
        </SheetTab>
        <SheetTab $w={59}>Hoja2</SheetTab>
        <SheetTab $w={82} $active>
          Hoja1 (2)
        </SheetTab>
        <SheetTab $w={81} $sep>
          Hoja1 (3)
        </SheetTab>
        <SheetTab $w={103} $sep>
          pda sociedad
        </SheetTab>
        <AddSheet>
          <svg width="17" height="17" viewBox="0 0 17 17">
            <circle cx="8.500" cy="8.500" r="7.500" fill="none" stroke="#777" />
            <path d="M8.500 4v9M4 8.500h9" stroke="#777" strokeWidth="1.500" />
          </svg>
        </AddSheet>
        <BarRight>
          <SplitDots>
            <svg width="3" height="16" viewBox="0 0 3 16">
              <path d="M1.500 0v16" stroke="#aaa" strokeWidth="2" strokeDasharray="2 4" />
            </svg>
          </SplitDots>
          <HScroll>
            <ScrollButton>
              <TriSmall dir="left" />
            </ScrollButton>
            <HThumb />
            <ScrollButton>
              <TriSmall dir="right" />
            </ScrollButton>
          </HScroll>
        </BarRight>
      </SheetBar>

      <StatusBar>
        INTRODUCIR
        <StatusRight>
          <ViewSlot>
            <svg width="14" height="18" viewBox="0 0 14 18">
              <path d="M.5.500h13v17H.500zM5 0v18M9.500 0v18M0 6h14M0 12h14" fill="none" stroke="#fff" />
            </svg>
          </ViewSlot>
          <ViewSlot>
            <svg width="14" height="18" viewBox="0 0 14 18">
              <path d="M.5.500h13v17H.500z" fill="none" stroke="#fff" />
              <path d="M3.500 4.500h7v9h-7zM5 7h4M5 9h4M5 11h4" fill="none" stroke="#fff" />
            </svg>
          </ViewSlot>
          <ViewSlot>
            <svg width="14" height="18" viewBox="0 0 14 18">
              <path d="M.5.500h13v17H.500z" fill="none" stroke="#fff" />
              <rect x="1" y="1" width="5" height="11" fill="#fff" />
              <rect x="8" y="1" width="5" height="11" fill="#fff" />
            </svg>
          </ViewSlot>
          <ZoomSign>-</ZoomSign>
          <ZoomSlider>
            <ZoomTick />
          </ZoomSlider>
          <ZoomSign>+</ZoomSign>
          <ZoomValue>190%</ZoomValue>
        </StatusRight>
      </StatusBar>

      <Taskbar>
        <SysButton>
          <WindowsLogo />
        </SysButton>
        <SysButton>
          <SearchIcon />
        </SysButton>
        <SysButton>
          <TaskViewIcon />
        </SysButton>
        <TaskApps>
          <TaskApp>
            <FaEdge size={24} color="#0a78d7" />
          </TaskApp>
          <TaskApp>
            <FolderIcon />
          </TaskApp>
          <TaskApp>
            <StoreIcon />
          </TaskApp>
          <TaskApp $open>
            <ChromeIcon />
          </TaskApp>
          <TaskApp>
            <WordIcon />
          </TaskApp>
          <TaskApp>
            <AppBadge $bg="#1f3f63" $r={3}>
              <DolphinIcon />
            </AppBadge>
          </TaskApp>
          <TaskApp>
            <CsLogo />
          </TaskApp>
          <TaskApp>
            <ExcelTask />
          </TaskApp>
          <TaskApp $open>
            <FaSkype size={24} color="#12a5e6" />
            <SkypeDot />
          </TaskApp>
          <TaskApp $open>
            <VlcIcon />
          </TaskApp>
          <TaskApp $open $active>
            <ExcelTask />
          </TaskApp>
          <TaskApp $open>
            <PianoIcon />
          </TaskApp>
        </TaskApps>
        <Tray>
          <TraySlot $w={20}>
            <svg width="12" height="7" viewBox="0 0 12 7">
              <path d="M1 6l5-5 5 5" fill="none" stroke="#fff" />
            </svg>
          </TraySlot>
          <TraySlot $w={28}>
            <FaDropbox size={17} color="#fff" />
            <TrayCheck />
          </TraySlot>
          <TraySlot $w={22}>
            <WifiIcon />
          </TraySlot>
          <TraySlot $w={23}>
            <PowerIcon />
          </TraySlot>
          <TraySlot $w={24}>
            <VolumeIcon />
          </TraySlot>
          <TraySlot $w={31}>
            <KeyboardIcon />
          </TraySlot>
          <TraySlot $w={36}>ESP</TraySlot>
          <Clock>
            <div>9:44 a. m.</div>
            <div>30/06/2017</div>
          </Clock>
          <TraySlot $w={46}>
            <NoteIcon />
          </TraySlot>
          <TraySlot $w={10} />
        </Tray>
      </Taskbar>
    </Window>
  );
};

export default App;
